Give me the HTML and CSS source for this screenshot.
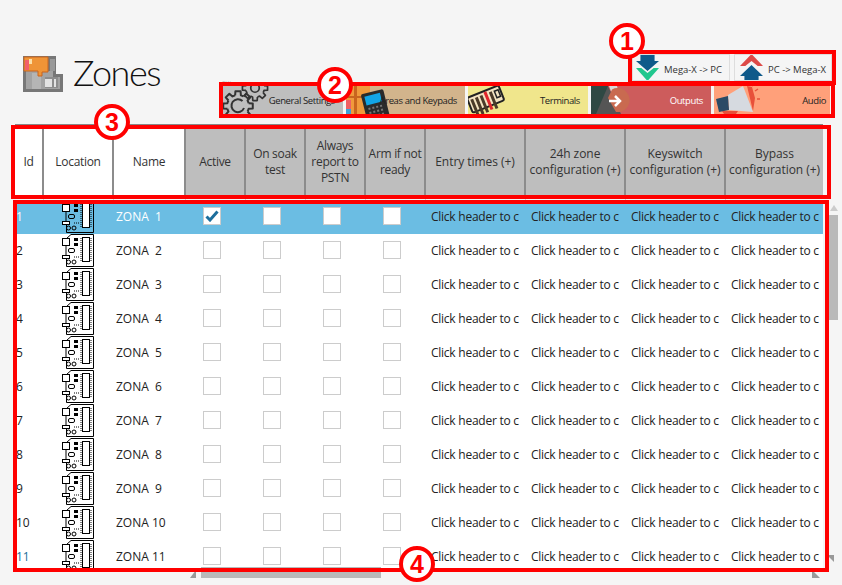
FILE: index.html
```html
<!DOCTYPE html>
<html lang="en">
<head>
  <meta charset="UTF-8">
  <title>Zones</title>
  <link rel="stylesheet" href="styles.css">
</head>
<body>

  <svg class="defs" width="0" height="0">
    <symbol id="pcb" viewBox="0 0 33 33">
      <path d="M9 .5H31.5V32.5H4.5V24M4.5 12V4.500L9 .5" fill="none" stroke="#000"/>
      <rect x=".5" y="4.500" width="7" height="7" fill="#fff" stroke="#000"/>
      <rect x=".5" y="21.500" width="7" height="3" fill="#fff" stroke="#000"/>
      <path d="M4 12V21" stroke="#000"/>
      <circle cx="6.500" cy="28" r="2" fill="none" stroke="#000"/>
      <circle cx="12" cy="28" r="2" fill="none" stroke="#000"/>
      <rect x="20.500" y="3.500" width="7" height="24" fill="#fff" stroke="#000"/>
      <rect x="12" y="4" width="4" height="3" fill="#000"/>
      <rect x="12" y="9" width="4" height="3" fill="#000"/>
      <rect x="6.500" y="14.500" width="6" height="4" rx="1.500" fill="none" stroke="#000"/>
      <path d="M12 23h5" stroke="#000" stroke-dasharray="1 1"/>
      <path d="M19 4V27M29 4V27" stroke="#000" stroke-dasharray="1 1"/>
    </symbol>
    <symbol id="gear-part" viewBox="-17 -17 34 34" overflow="visible">
      <path d="M-2.850 -10.630L-2.600 -14.770H2.600L2.850 -10.630A11 11 0 0 1 5.500 -9.530" fill="none" stroke="#333" stroke-width="2" stroke-linejoin="round"/>
    </symbol>
  </svg>

  <div class="top">
    <div class="title">
      <svg class="zones-icon" width="40" height="36" viewBox="0 0 40 36">
        <path d="M0 0H33V18H40V36H0Z" fill="#777"/>
        <path d="M3 15H30V21H37V33H3Z" fill="#a3a3a3"/>
        <rect x="9" y="17" width="9" height="16" fill="#b5b5b5"/>
        <rect x="22" y="21" width="13" height="11" fill="#8d8d8d"/>
        <rect x="22" y="23" width="7" height="8" fill="#e3e3e3"/>
        <rect x="31" y="23" width="2" height="8" fill="#e3e3e3"/>
        <rect x="27" y="3" width="5" height="12" fill="#999"/>
        <path d="M1 1H25V16H19V20H15V15H1Z" fill="#ef9437" stroke="#c9651f"/>
        <rect x="2" y="4" width="4" height="10" fill="#f2606a"/>
        <rect x="6" y="3" width="3" height="5" fill="#fbe0a8"/>
      </svg>
      <h1>Zones</h1>
    </div>

    <div class="tools">
      <div class="sync">
        <button class="sync-btn">
          <svg width="23" height="27" viewBox="0 0 26 27" preserveAspectRatio="none">
            <path d="M5 0H21V7H26L13 17 0 7H5Z" fill="#0f5a8a"/>
            <path d="M0 14H6L13 19 20 14H26L13 27Z" fill="#21c78e"/>
          </svg>
          <span>Mega-X -&gt; PC</span>
        </button>
        <button class="sync-btn sync-up">
          <svg width="23" height="27" viewBox="0 0 26 27" preserveAspectRatio="none">
            <path d="M13 0 26 12H20L13 7 6 12H0Z" fill="#dd4a48"/>
            <path d="M13 11 26 22H21V27H5V22H0Z" fill="#0f5a8a"/>
          </svg>
          <span>PC -&gt; Mega-X</span>
        </button>
      </div>
      <div class="filter-label">Filters</div>
      <div class="tabs">
        <div class="tab tab-general">
          <svg class="tab-icon" width="48" height="28" viewBox="0 0 48 28">
            <g transform="translate(16 20)">
              <use href="#gear-part" x="-17" y="-17" width="34" height="34"/>
              <use href="#gear-part" x="-17" y="-17" width="34" height="34" transform="rotate(45)"/>
              <use href="#gear-part" x="-17" y="-17" width="34" height="34" transform="rotate(90)"/>
              <use href="#gear-part" x="-17" y="-17" width="34" height="34" transform="rotate(135)"/>
              <use href="#gear-part" x="-17" y="-17" width="34" height="34" transform="rotate(180)"/>
              <use href="#gear-part" x="-17" y="-17" width="34" height="34" transform="rotate(225)"/>
              <use href="#gear-part" x="-17" y="-17" width="34" height="34" transform="rotate(270)"/>
              <use href="#gear-part" x="-17" y="-17" width="34" height="34" transform="rotate(315)"/>
              <path d="M4.500 -5a6.500 6.500 0 1 0 1.500 7" fill="none" stroke="#333" stroke-width="2"/>
            </g>
            <g transform="translate(33 2) scale(.85)">
              <use href="#gear-part" x="-17" y="-17" width="34" height="34"/>
              <use href="#gear-part" x="-17" y="-17" width="34" height="34" transform="rotate(45)"/>
              <use href="#gear-part" x="-17" y="-17" width="34" height="34" transform="rotate(90)"/>
              <use href="#gear-part" x="-17" y="-17" width="34" height="34" transform="rotate(135)"/>
              <use href="#gear-part" x="-17" y="-17" width="34" height="34" transform="rotate(180)"/>
              <use href="#gear-part" x="-17" y="-17" width="34" height="34" transform="rotate(225)"/>
              <use href="#gear-part" x="-17" y="-17" width="34" height="34" transform="rotate(270)"/>
              <use href="#gear-part" x="-17" y="-17" width="34" height="34" transform="rotate(315)"/>
              <circle r="5" fill="none" stroke="#333" stroke-width="2"/>
            </g>
          </svg>
          <span>General Settings</span>
        </div>
        <div class="tab tab-areas">
          <svg class="tab-icon" width="46" height="28" viewBox="0 0 46 28">
            <path d="M0 6H6V0H24V28H0Z" fill="#f09a3c"/>
            <path d="M8 0H11V28H8ZM0 10H24V12H0Z" fill="#c9651f"/>
            <rect x="0" y="14" width="5" height="9" fill="#ef5f63"/>
            <rect x="0" y="23" width="5" height="5" fill="#3e9fd8"/>
            <g transform="rotate(-14 30 16)">
              <rect x="17" y="5" width="23" height="32" rx="2" fill="#2b2b2b"/>
              <rect x="20" y="8" width="16" height="9" fill="#12a5e6"/>
              <path d="M21 21h14M21 25h14M21 29h14" stroke="#777" stroke-width="2" stroke-dasharray="2 2"/>
            </g>
          </svg>
          <span>Areas and Keypads</span>
        </div>
        <div class="tab tab-terminals">
          <svg class="tab-icon" width="38" height="28" viewBox="0 0 38 28">
            <g transform="rotate(-22 18 14)">
              <rect x="1" y="5" width="34" height="16" rx="2" fill="#f3e3c1" stroke="#222" stroke-width="2"/>
              <path d="M5 8V26M10 8V26M15 8V26M25 8V26" stroke="#4a3a28" stroke-width="3"/>
              <path d="M20 6V25" stroke="#e0262c" stroke-width="3"/>
              <path d="M29 9h4v7h-4z" fill="none" stroke="#222" stroke-width="1.500"/>
            </g>
          </svg>
          <span>Terminals</span>
        </div>
        <div class="tab tab-outputs">
          <svg class="tab-icon" width="40" height="28" viewBox="0 0 40 28">
            <rect width="17" height="28" fill="#2f4843"/>
            <path d="M17 0 30 28H5Z" fill="#555"/>
            <path d="M18 0H26L28 8H21Z" fill="#d9d9d9"/>
            <path d="M21 3.500A12 12 0 1 1 25 26L17 12Z" fill="#c96a50"/>
            <path d="M18 15H29M24 10l5 5-5 5" fill="none" stroke="#fff" stroke-width="2.500"/>
          </svg>
          <span>Outputs</span>
        </div>
        <div class="tab tab-audio">
          <svg class="tab-icon" width="48" height="28" viewBox="0 0 48 28">
            <path d="M8 25H24L22 28H10Z" fill="#e8503a"/>
            <path d="M33 0 38 1 41 12 39 25Z" fill="#e8503a"/>
            <path d="M41 5l3-2M43 13h3M38 0l1-1" stroke="#e8503a" stroke-width="1.500"/>
            <path d="M14 9 29 0 39 26 15 24Z" fill="#d6dae0"/>
            <path d="M2 13 14 10 15 24 5 26Z" fill="#2c4a66"/>
          </svg>
          <span>Audio</span>
        </div>
      </div>
    </div>
  </div>

  <div class="grid-area">
    <div class="grid-clip">
      <table class="zones">
        <colgroup>
          <col class="col-id">
          <col class="col-location">
          <col class="col-name">
          <col class="col-check">
          <col class="col-check">
          <col class="col-check">
          <col class="col-check">
          <col class="col-config">
          <col class="col-config">
          <col class="col-config">
          <col class="col-last">
        </colgroup>
        <thead>
          <tr>
            <th class="plain">Id</th>
            <th class="plain">Location</th>
            <th class="plain">Name</th>
            <th>Active</th>
            <th>On soak<br>test</th>
            <th>Always<br>report to<br>PSTN</th>
            <th>Arm if not<br>ready</th>
            <th class="wide">Entry times (+)</th>
            <th class="wide">24h zone<br>configuration (+)</th>
            <th class="wide">Keyswitch<br>configuration (+)</th>
            <th class="wide">Bypass<br>configuration (+)</th>
          </tr>
        </thead>
        <tbody>
          <tr class="selected">
            <td>1</td><td><svg class="pcb"><use href="#pcb"/></svg></td><td class="name">ZONA  1</td>
            <td><span class="check on"><svg width="14" height="12" viewBox="0 0 14 12"><path d="M1.500 6.500 5 10 12.500 1.500" fill="none" stroke="#1c6e9c" stroke-width="3"/></svg></span></td><td><span class="check on"></span></td><td><span class="check on"></span></td><td><span class="check on"></span></td>
            <td class="cfg">Click header to c</td><td class="cfg">Click header to c</td><td class="cfg">Click header to c</td><td class="cfg">Click header to c</td>
          </tr>
          <tr>
            <td>2</td><td><svg class="pcb"><use href="#pcb"/></svg></td><td class="name">ZONA  2</td>
            <td><span class="check"></span></td><td><span class="check"></span></td><td><span class="check"></span></td><td><span class="check"></span></td>
            <td class="cfg">Click header to c</td><td class="cfg">Click header to c</td><td class="cfg">Click header to c</td><td class="cfg">Click header to c</td>
          </tr>
          <tr>
            <td>3</td><td><svg class="pcb"><use href="#pcb"/></svg></td><td class="name">ZONA  3</td>
            <td><span class="check"></span></td><td><span class="check"></span></td><td><span class="check"></span></td><td><span class="check"></span></td>
            <td class="cfg">Click header to c</td><td class="cfg">Click header to c</td><td class="cfg">Click header to c</td><td class="cfg">Click header to c</td>
          </tr>
          <tr>
            <td>4</td><td><svg class="pcb"><use href="#pcb"/></svg></td><td class="name">ZONA  4</td>
            <td><span class="check"></span></td><td><span class="check"></span></td><td><span class="check"></span></td><td><span class="check"></span></td>
            <td class="cfg">Click header to c</td><td class="cfg">Click header to c</td><td class="cfg">Click header to c</td><td class="cfg">Click header to c</td>
          </tr>
          <tr>
            <td>5</td><td><svg class="pcb"><use href="#pcb"/></svg></td><td class="name">ZONA  5</td>
            <td><span class="check"></span></td><td><span class="check"></span></td><td><span class="check"></span></td><td><span class="check"></span></td>
            <td class="cfg">Click header to c</td><td class="cfg">Click header to c</td><td class="cfg">Click header to c</td><td class="cfg">Click header to c</td>
          </tr>
          <tr>
            <td>6</td><td><svg class="pcb"><use href="#pcb"/></svg></td><td class="name">ZONA  6</td>
            <td><span class="check"></span></td><td><span class="check"></span></td><td><span class="check"></span></td><td><span class="check"></span></td>
            <td class="cfg">Click header to c</td><td class="cfg">Click header to c</td><td class="cfg">Click header to c</td><td class="cfg">Click header to c</td>
          </tr>
          <tr>
            <td>7</td><td><svg class="pcb"><use href="#pcb"/></svg></td><td class="name">ZONA  7</td>
            <td><span class="check"></span></td><td><span class="check"></span></td><td><span class="check"></span></td><td><span class="check"></span></td>
            <td class="cfg">Click header to c</td><td class="cfg">Click header to c</td><td class="cfg">Click header to c</td><td class="cfg">Click header to c</td>
          </tr>
          <tr>
            <td>8</td><td><svg class="pcb"><use href="#pcb"/></svg></td><td class="name">ZONA  8</td>
            <td><span class="check"></span></td><td><span class="check"></span></td><td><span class="check"></span></td><td><span class="check"></span></td>
            <td class="cfg">Click header to c</td><td class="cfg">Click header to c</td><td class="cfg">Click header to c</td><td class="cfg">Click header to c</td>
          </tr>
          <tr>
            <td>9</td><td><svg class="pcb"><use href="#pcb"/></svg></td><td class="name">ZONA  9</td>
            <td><span class="check"></span></td><td><span class="check"></span></td><td><span class="check"></span></td><td><span class="check"></span></td>
            <td class="cfg">Click header to c</td><td class="cfg">Click header to c</td><td class="cfg">Click header to c</td><td class="cfg">Click header to c</td>
          </tr>
          <tr>
            <td>10</td><td><svg class="pcb"><use href="#pcb"/></svg></td><td class="name">ZONA 10</td>
            <td><span class="check"></span></td><td><span class="check"></span></td><td><span class="check"></span></td><td><span class="check"></span></td>
            <td class="cfg">Click header to c</td><td class="cfg">Click header to c</td><td class="cfg">Click header to c</td><td class="cfg">Click header to c</td>
          </tr>
          <tr>
            <td class="row-link">11</td><td><svg class="pcb"><use href="#pcb"/></svg></td><td class="name">ZONA 11</td>
            <td><span class="check"></span></td><td><span class="check"></span></td><td><span class="check"></span></td><td><span class="check"></span></td>
            <td class="cfg">Click header to c</td><td class="cfg">Click header to c</td><td class="cfg">Click header to c</td><td class="cfg">Click header to c</td>
          </tr>
        </tbody>
      </table>
    </div>
    <div class="vbar">
      <div class="arrow-up"></div>
      <div class="vthumb"></div>
      <div class="arrow-down"></div>
    </div>
  </div>

  <div class="hbar">
    <div class="arrow-left"></div>
    <div class="hthumb"></div>
    <div class="arrow-right"></div>
  </div>

  <!-- Callouts on top of the screenshot -->
  <div class="box box1"></div>
  <div class="box box2"></div>
  <div class="box box3"></div>
  <div class="box box4"></div>
  <div class="mark mark1">1</div>
  <div class="mark mark2">2</div>
  <div class="mark mark3">3</div>
  <div class="mark mark4">4</div>

</body>
</html>
```

FILE: styles.css
```css
* {
  box-sizing: border-box;
}
html, body {
  height: 100%;
}
body {
  margin: 0;
  padding-left: 15px;
  background: #f5f5f5;
  color: #222;
  font-family: "Open Sans", "Noto Sans", sans-serif;
  font-size: 12px;
  overflow: hidden;
  position: relative;
}
.defs {
  position: absolute;
}

/* top part */
.top {
  display: flex;
  height: 124px;
  padding-right: 12px;
}
.title {
  display: flex;
  align-items: flex-start;
  padding: 56px 0 0 8px;
}
.zones-icon {
  display: block;
}
h1 {
  margin: -7px 0 0 10px;
  font-family: Lato, "Open Sans", sans-serif;
  font-size: 36px;
  font-weight: 300;
  line-height: 46px;
  letter-spacing: -1.500px;
  color: #111;
}
.tools {
  margin-left: auto;
  width: 608px;
  display: flex;
  flex-direction: column;
  align-items: flex-start;
}
.sync {
  display: flex;
  gap: 4px;
  margin: 54px 0 0 410px;
}
.sync-btn {
  width: 98px;
  height: 27px;
  padding: 0 0 0 3px;
  display: flex;
  align-items: center;
  gap: 5px;
  background: #f5f5f5;
  border: 1px solid #ddd;
  font-family: inherit;
  font-size: 9.500px;
  color: #333;
  white-space: nowrap;
  overflow: hidden;
}
.sync-up {
  padding-left: 5px;
}
.sync-btn svg {
  flex: none;
}
.sync-btn span {
  padding-top: 3px;
}
.filter-label {
  height: 5px;
  font-size: 7px;
  line-height: 5px;
  color: #bbb;
}
.tabs {
  display: flex;
  gap: 3px;
  width: 608px;
  height: 28px;
}
.tab {
  position: relative;
  height: 28px;
  display: flex;
  align-items: center;
  justify-content: flex-end;
  padding-right: 8px;
  font-size: 9.500px;
  letter-spacing: -.4px;
  overflow: hidden;
  flex: none;
}
.tab span {
  position: relative;
}
.tab-icon {
  position: absolute;
  left: 0;
  top: 0;
}
.tab-general { background: #bebebe; width: 121px; }
.tab-areas { background: #d2b48c; width: 119px; }
.tab-terminals { background: #f0e68c; width: 120px; }
.tab-outputs { background: #cd5c5c; width: 120px; color: #fff; }
.tab-audio { background: #ffa07a; width: 116px; padding-right: 4px; }

/* grid */
.grid-area {
  display: flex;
  height: 444px;
}
.grid-clip {
  width: 808px;
  height: 444px;
  overflow: hidden;
  border-top: 1px solid #888;
  background: #fff;
}
.zones {
  width: 808px;
  table-layout: fixed;
  border-collapse: separate;
  border-spacing: 0;
}
.col-id { width: 29px; }
.col-location { width: 70px; }
.col-name { width: 72px; }
.col-check { width: 60px; }
.col-config { width: 100px; }
.col-last { width: 97px; }
th {
  height: 75px;
  padding: 2px 0 0;
  background: #bebebe;
  border-right: 2px solid #8c8c8c;
  border-bottom: 3px solid #f5f5f5;
  font-weight: 400;
  line-height: 16px;
  letter-spacing: -.3px;
  text-align: center;
  color: #333;
}
th.wide {
  letter-spacing: -.05px;
}
th:last-child {
  border-right: 0;
}
th.plain {
  background: #fff;
}
td {
  height: 34px;
  padding: 0 0 2px;
  white-space: pre;
  overflow: hidden;
  color: #222;
}
td:first-child {
  padding-left: 1px;
}
.selected td {
  background: #6bbde3;
  color: #fff;
}
.selected .cfg {
  color: #222;
}
.row-link {
  color: #1c6e9c;
}
.pcb {
  display: block;
  width: 33px;
  height: 33px;
  margin: 0 0 -1px 18px;
}
.name {
  padding-left: 2px;
}
.check {
  display: block;
  width: 18px;
  height: 18px;
  margin-left: 17px;
  border: 1px solid #ccc;
}
.check.on {
  background: #fff;
  padding: 2px 1px;
}
.check svg {
  display: block;
}
.cfg {
  padding-left: 5px;
  letter-spacing: -.25px;
}

/* scrollbars */
.vbar {
  width: 15px;
  margin-left: 3px;
  padding-top: 81px;
  display: flex;
  flex-direction: column;
  align-items: flex-end;
}
.arrow-up {
  border: 4px solid transparent;
  border-top: 0;
  border-bottom: 6px solid #ccc;
  margin-right: 3px;
}
.vthumb {
  width: 12px;
  height: 105px;
  margin-top: 4px;
  margin-right: 3px;
  background: #b9b9b9;
}
.arrow-down {
  border-top: 7px solid #999;
  border-left: 7px solid transparent;
  margin-top: auto;
  margin-bottom: 6px;
  margin-right: 7px;
}
.hbar {
  display: flex;
  width: 805px;
  height: 11px;
  margin-top: -1px;
  padding-left: 175px;
}
.hthumb {
  width: 180px;
  height: 11px;
  margin-left: 5px;
  background: #b9b9b9;
}
.arrow-left {
  margin-top: 3px;
  border-bottom: 8px solid #999;
  border-left: 6px solid transparent;
}
.arrow-right {
  margin-left: auto;
  margin-top: 3px;
  border-bottom: 8px solid #999;
  border-right: 8px solid transparent;
}

/* callouts */
.box {
  position: absolute;
  border: 4px solid #f00;
}
.box1 { left: 628px; top: 50px; width: 208px; height: 35px; }
.box2 { left: 219px; top: 82px; width: 616px; height: 36px; }
.box3 { left: 11px; top: 125px; width: 820px; height: 74px; }
.box4 { left: 13px; top: 200px; width: 816px; height: 372px; }
.mark {
  position: absolute;
  width: 36px;
  height: 36px;
  border: 4px solid #f00;
  border-radius: 50%;
  background: #fff;
  color: #f00;
  font-family: "Liberation Sans", Arial, sans-serif;
  font-size: 25px;
  font-weight: 700;
  line-height: 28px;
  text-align: center;
}
.mark1 { left: 609px; top: 23px; }
.mark2 { left: 317px; top: 67px; }
.mark3 { left: 94px; top: 104px; }
.mark4 { left: 399px; top: 546px; }
```
